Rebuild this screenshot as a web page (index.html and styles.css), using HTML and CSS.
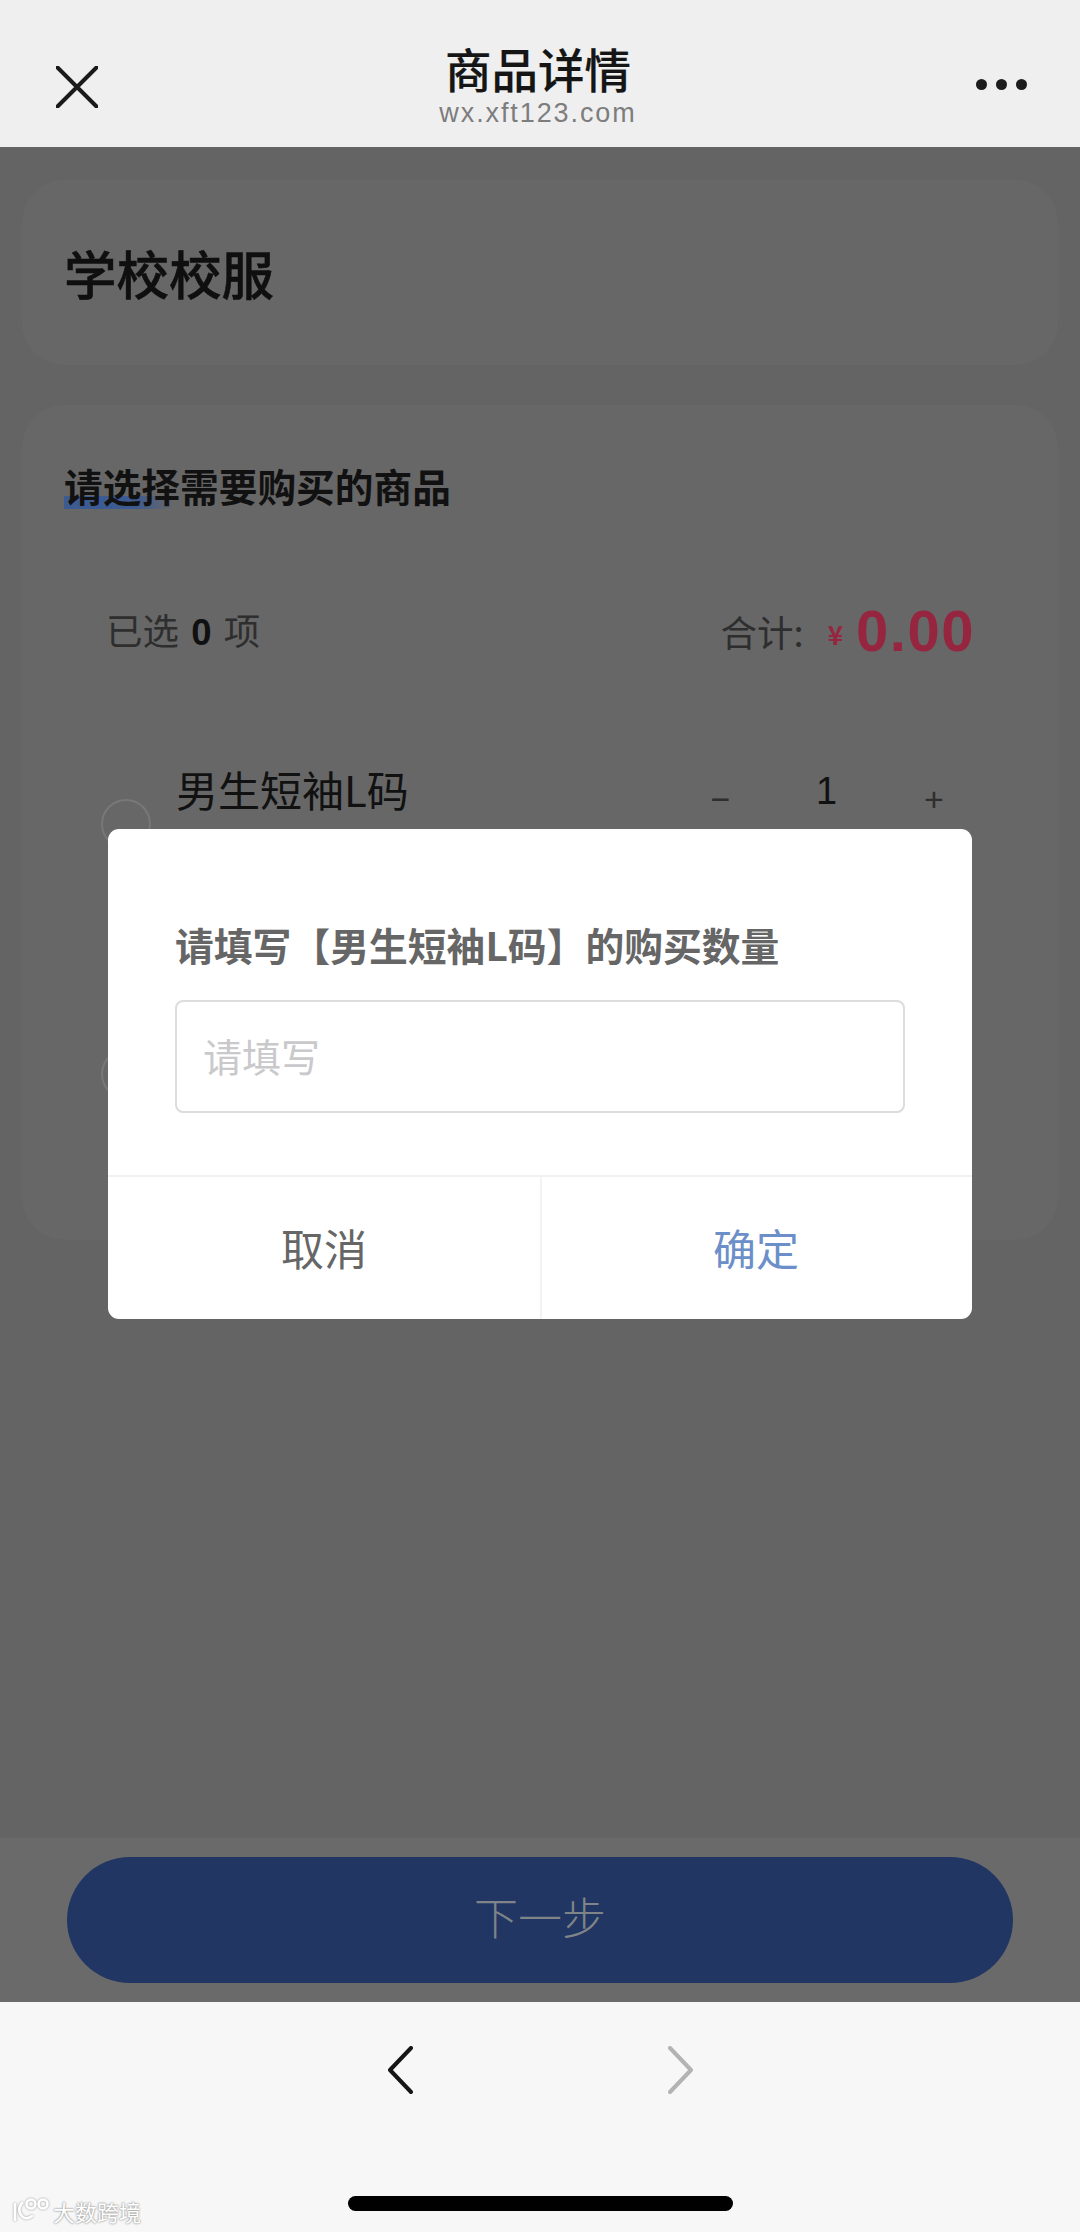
FILE: index.html
```html
<!DOCTYPE html>
<html lang="zh-CN">
<head>
<meta charset="utf-8">
<title>商品详情</title>
<link rel="stylesheet" href="styles.css">
</head>
<body>
<div class="phone">
  <header class="topbar">
    <svg class="close-icon" viewBox="0 0 42 42" width="42" height="42"><path d="M1.5 1.5 L40.5 40.5 M40.5 1.5 L1.5 40.5" fill="none" stroke="#1a1a1a" stroke-width="4" stroke-linecap="round"/></svg>
    <div class="topbar-title">
      <div class="title">商品详情</div>
      <div class="url">wx.xft123.com</div>
    </div>
    <div class="more"><i></i><i></i><i></i></div>
  </header>

  <main class="content">
    <section class="card card-head">
      <h1 class="shop-name">学校校服</h1>
    </section>
    <section class="card card-goods">
      <h2 class="section-title">请选择需要购买的商品</h2>
      <div class="summary">
        <div class="picked">已选 <b>0</b> 项</div>
        <div class="total">合计: <span class="yen">¥</span><span class="amount">0.00</span></div>
      </div>
      <div class="goods-row">
        <span class="radio"></span>
        <span class="goods-name">男生短袖L码</span>
        <div class="stepper"><span class="step">−</span><span class="qty">1</span><span class="step">+</span></div>
      </div>
      <div class="goods-row">
        <span class="radio"></span>
        <span class="goods-name"></span>
        <div class="stepper"></div>
      </div>
    </section>
    <div class="next-bar"><div class="next-btn">下一步</div></div>

    <div class="dialog">
      <div class="dialog-body">
        <div class="dialog-title">请填写【男生短袖L码】的购买数量</div>
        <div class="dialog-input">请填写</div>
      </div>
      <div class="dialog-actions">
        <div class="action">取消</div>
        <div class="action action-ok">确定</div>
      </div>
    </div>
  </main>

  <footer class="navbar">
    <div class="nav-arrows">
      <svg viewBox="0 0 26 48" width="26" height="48"><path d="M24 2 L3 24 L24 46" fill="none" stroke="#161616" stroke-width="4" stroke-linecap="round" stroke-linejoin="round"/></svg>
      <svg viewBox="0 0 26 48" width="26" height="48"><path d="M2 2 L23 24 L2 46" fill="none" stroke="#b3b3b3" stroke-width="4" stroke-linecap="round" stroke-linejoin="round"/></svg>
    </div>
    <div class="home-bar"></div>
    <div class="watermark">
      <svg viewBox="0 0 40 26" width="40" height="26"><g fill="none" stroke="#fff" stroke-width="2.6" stroke-linecap="round"><path d="M4 6 V22"/><path d="M11 5 Q6 11 10 17 Q14 23 21 18"/><circle cx="20" cy="6" r="4.5"/><circle cx="32" cy="6" r="4.5"/></g></svg>
      <span>大数跨境</span>
    </div>
  </footer>
</div>
</body>
</html>
```
FILE: styles.css
```css
* { box-sizing: border-box; }
html, body { margin: 0; padding: 0; }
body { font-family: "Noto Sans CJK SC", "Noto Sans", sans-serif; background: #666; }
.phone { width: 1080px; height: 2232px; display: flex; flex-direction: column; overflow: hidden; }

.topbar { height: 147px; background: #efefef; display: flex; align-items: flex-start; justify-content: space-between; padding: 66px 53px 0 56px; position: relative; }
.close-icon { display: block; }
.topbar-title { position: absolute; left: 0; right: 4px; top: 41px; text-align: center; }
.title { font-size: 46.5px; line-height: 54px; color: #151515; font-weight: 500; -webkit-text-stroke: 0.2px #151515; }
.url { font-family: "Liberation Sans", sans-serif; font-size: 27px; line-height: 30px; letter-spacing: 1.9px; color: #7d7d7d; margin-top: 3px; }
.more { display: flex; gap: 9px; margin-top: 13px; }
.more i { width: 11px; height: 11px; border-radius: 50%; background: #1c1c1c; }

.content { flex: 1; position: relative; background: #646464; padding-top: 33px; display: flex; flex-direction: column; }
.card { margin: 0 22px; background: #676767; border-radius: 42px; }
.card-head { height: 185px; padding: 56px 43px 0; }
.shop-name { margin: 0 0 0 -1px; font-size: 52.5px; line-height: 72px; font-weight: 500; color: #0f0f0f; -webkit-text-stroke: 0.5px #0f0f0f; }
.card-goods { height: 835px; margin-top: 40px; padding: 55px 42px 0; }
.section-title { display: block; width: max-content; margin: 0; font-size: 38.7px; line-height: 50px; font-weight: 700; color: #111; background: linear-gradient(90deg, #3c5b92, #3c5b92 70px, rgba(60,91,146,0) 110px) left 36px / 110px 13px no-repeat; }

.summary { margin: 47px 6px 0 11px; height: 200px; background: #676768; border-radius: 24px; padding: 48px 35px 0 31px; display: flex; justify-content: space-between; align-items: flex-start; }
.picked { font-size: 36.5px; line-height: 50px; color: #2e2e2e; }
.picked b { font-weight: 700; color: #101010; font-family: "Liberation Sans", sans-serif; margin: 0 4px; }
.total { font-size: 36.5px; line-height: 50px; color: #2e2e2e; display: flex; align-items: center; }
.yen { color: #96253f; font-size: 26px; font-weight: 700; margin: 4px 13px 0 24px; }
.amount { color: #96253f; font-family: "Liberation Sans", sans-serif; font-size: 58px; font-weight: 700; line-height: 50px; letter-spacing: 1.5px; margin-top: -2px; }

.goods-row { height: 250px; display: flex; align-items: flex-start; position: relative; }
.radio { width: 50px; height: 50px; border: 2px solid #787878; border-radius: 50%; margin: 42px 0 0 37px; flex: none; }
.goods-name { font-size: 42px; line-height: 56px; color: #111; margin: 4px 0 0 25px; flex: 1; }
.stepper { width: 300px; height: 88px; margin: -2px 38px 0 0; display: grid; grid-template-columns: 85px 1fr 88px; align-items: center; text-align: center; background: #676768; border-radius: 6px; }
.step { font-size: 34px; color: #2e2e2e; font-family: "Liberation Sans", sans-serif; }
.qty { font-size: 38px; color: #111; font-family: "Liberation Sans", sans-serif; margin-top: -16px; }

.next-bar { margin-top: auto; height: 164px; background: #6a6a6a; padding: 19px 67px 0; }
.next-btn { height: 126px; border-radius: 63px; background: #213663; color: #7f8488; font-size: 44px; font-weight: 300; line-height: 118px; text-align: center; }

.dialog { position: absolute; left: 108px; top: 682px; width: 864px; height: 490px; background: #fff; border-radius: 11px; display: flex; flex-direction: column; overflow: hidden; }
.dialog-body { height: 348px; padding: 90px 67px 0; border-bottom: 2px solid #f1f1f1; }
.dialog-title { font-size: 38.8px; line-height: 50px; font-weight: 700; color: #666; white-space: nowrap; }
.dialog-input { margin-top: 31px; width: 730px; height: 113px; border: 2px solid #dcdcdc; border-radius: 8px; padding-left: 26px; font-size: 39px; line-height: 107px; color: #c9c9cc; }
.dialog-actions { flex: 1; display: grid; grid-template-columns: 1fr 1fr; }
.action { display: flex; align-items: center; justify-content: center; font-size: 43px; color: #666; padding-bottom: 2px; }
.action-ok { color: #6c8fc9; border-left: 2px solid #f3f3f3; padding-right: 2px; }

.navbar { height: 230px; background: #f7f7f7; position: relative; padding-top: 44px; display: flex; flex-direction: column; align-items: center; }
.nav-arrows { display: flex; gap: 255px; }
.nav-arrows svg { display: block; }
.home-bar { width: 385px; height: 15px; border-radius: 8px; background: #000; margin-top: 102px; }
.watermark { position: absolute; left: 11px; top: 195px; display: flex; align-items: center; gap: 2px; color: #fff; font-size: 22px; line-height: 28px; text-shadow: 0 0 2px #999, 0 0 2px #999; }
.watermark svg { filter: drop-shadow(0 0 1px #999); }
```
